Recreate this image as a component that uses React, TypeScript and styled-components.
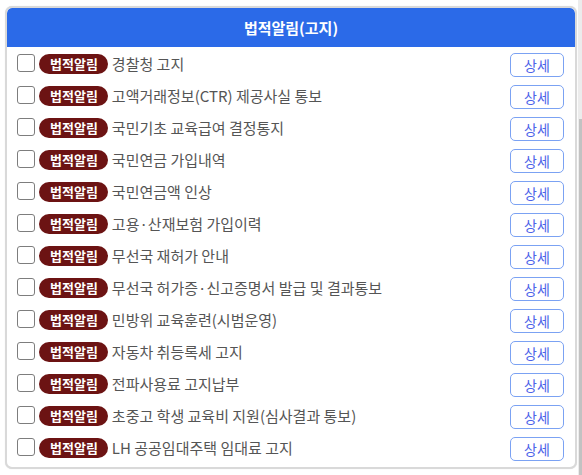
import React from "react";
import styled, { createGlobalStyle } from "styled-components";

const GlobalStyle = createGlobalStyle`
  html, body { margin: 0; padding: 0; background: #ffffff; }
  body { font-family: "Noto Sans CJK KR", "Noto Sans", sans-serif; }
  * { box-sizing: border-box; }
`;

const Page = styled.div`
  display: flex;
  width: 582px;
  height: 475px;
  overflow: hidden;
`;

const Main = styled.div`
  flex: 1;
  padding: 6px 1px 0 5px;
`;

const ScrollRail = styled.div`
  width: 4px;
  background: #ececec;
  display: flex;
  flex-direction: column;
  align-items: flex-end;
`;

const ScrollThumb = styled.div`
  width: 3px;
  margin-top: 119px;
  flex: 1;
  background: #c2c2c2;
`;

const Panel = styled.section`
  border: 2px solid #d9d9d9;
  border-radius: 7px;
  box-shadow: 0 0 1px rgba(0, 0, 0, 0.15);
  background: #fff;
  overflow: hidden;
`;

const Header = styled.header`
  height: 39px;
  background: #2b6ae8;
  color: #fff;
  font-weight: 700;
  font-size: 15px;
  display: flex;
  align-items: center;
  justify-content: center;
  border-radius: 5px 5px 0 0;
`;

const List = styled.ul`
  list-style: none;
  margin: 0;
  padding: 2px 0;
`;

const Row = styled.li`
  height: 32px;
  display: flex;
  align-items: center;
  justify-content: space-between;
  padding: 0 11px 0 10px;
`;

const Lead = styled.div`
  display: flex;
  align-items: center;
  gap: 4px;
  padding-bottom: 5px;
`;

const Check = styled.input.attrs({ type: "checkbox" })`
  appearance: none;
  -webkit-appearance: none;
  margin: 0;
  width: 18px;
  height: 18px;
  border: 1px solid #7d7d7d;
  border-radius: 3px;
  background: #fff;
  flex: none;
`;

const Badge = styled.span`
  height: 20px;
  padding: 0 10px 0 11px;
  border-radius: 10px;
  background: #6c1313;
  color: #fff;
  font-size: 13px;
  font-weight: 700;
  display: inline-flex;
  align-items: center;
  line-height: 1;
  margin-top: 2px;
`;

const Title = styled.span`
  font-size: 15px;
  color: #555;
  line-height: 1;
  margin-top: 1px;
`;

const DetailButton = styled.button`
  width: 54px;
  height: 24px;
  border: 1px solid #7ba2f3;
  border-radius: 5px;
  background: #fff;
  color: #4d63e9;
  font-family: inherit;
  font-size: 14px;
  padding: 0;
  line-height: 1;
  cursor: pointer;
`;

const items = [
  "경찰청 고지",
  "고액거래정보(CTR) 제공사실 통보",
  "국민기초 교육급여 결정통지",
  "국민연금 가입내역",
  "국민연금액 인상",
  "고용·산재보험 가입이력",
  "무선국 재허가 안내",
  "무선국 허가증·신고증명서 발급 및 결과통보",
  "민방위 교육훈련(시범운영)",
  "자동차 취등록세 고지",
  "전파사용료 고지납부",
  "초중고 학생 교육비 지원(심사결과 통보)",
  "LH 공공임대주택 임대료 고지",
];

export default function App() {
  return (
    <>
      <GlobalStyle />
      <Page>
        <Main>
          <Panel>
            <Header>법적알림(고지)</Header>
            <List>
              {items.map((t) => (
                <Row key={t}>
                  <Lead>
                    <Check aria-label={t} />
                    <Badge>법적알림</Badge>
                    <Title>{t}</Title>
                  </Lead>
                  <DetailButton>상세</DetailButton>
                </Row>
              ))}
            </List>
          </Panel>
        </Main>
        <ScrollRail>
          <ScrollThumb />
        </ScrollRail>
      </Page>
    </>
  );
}
